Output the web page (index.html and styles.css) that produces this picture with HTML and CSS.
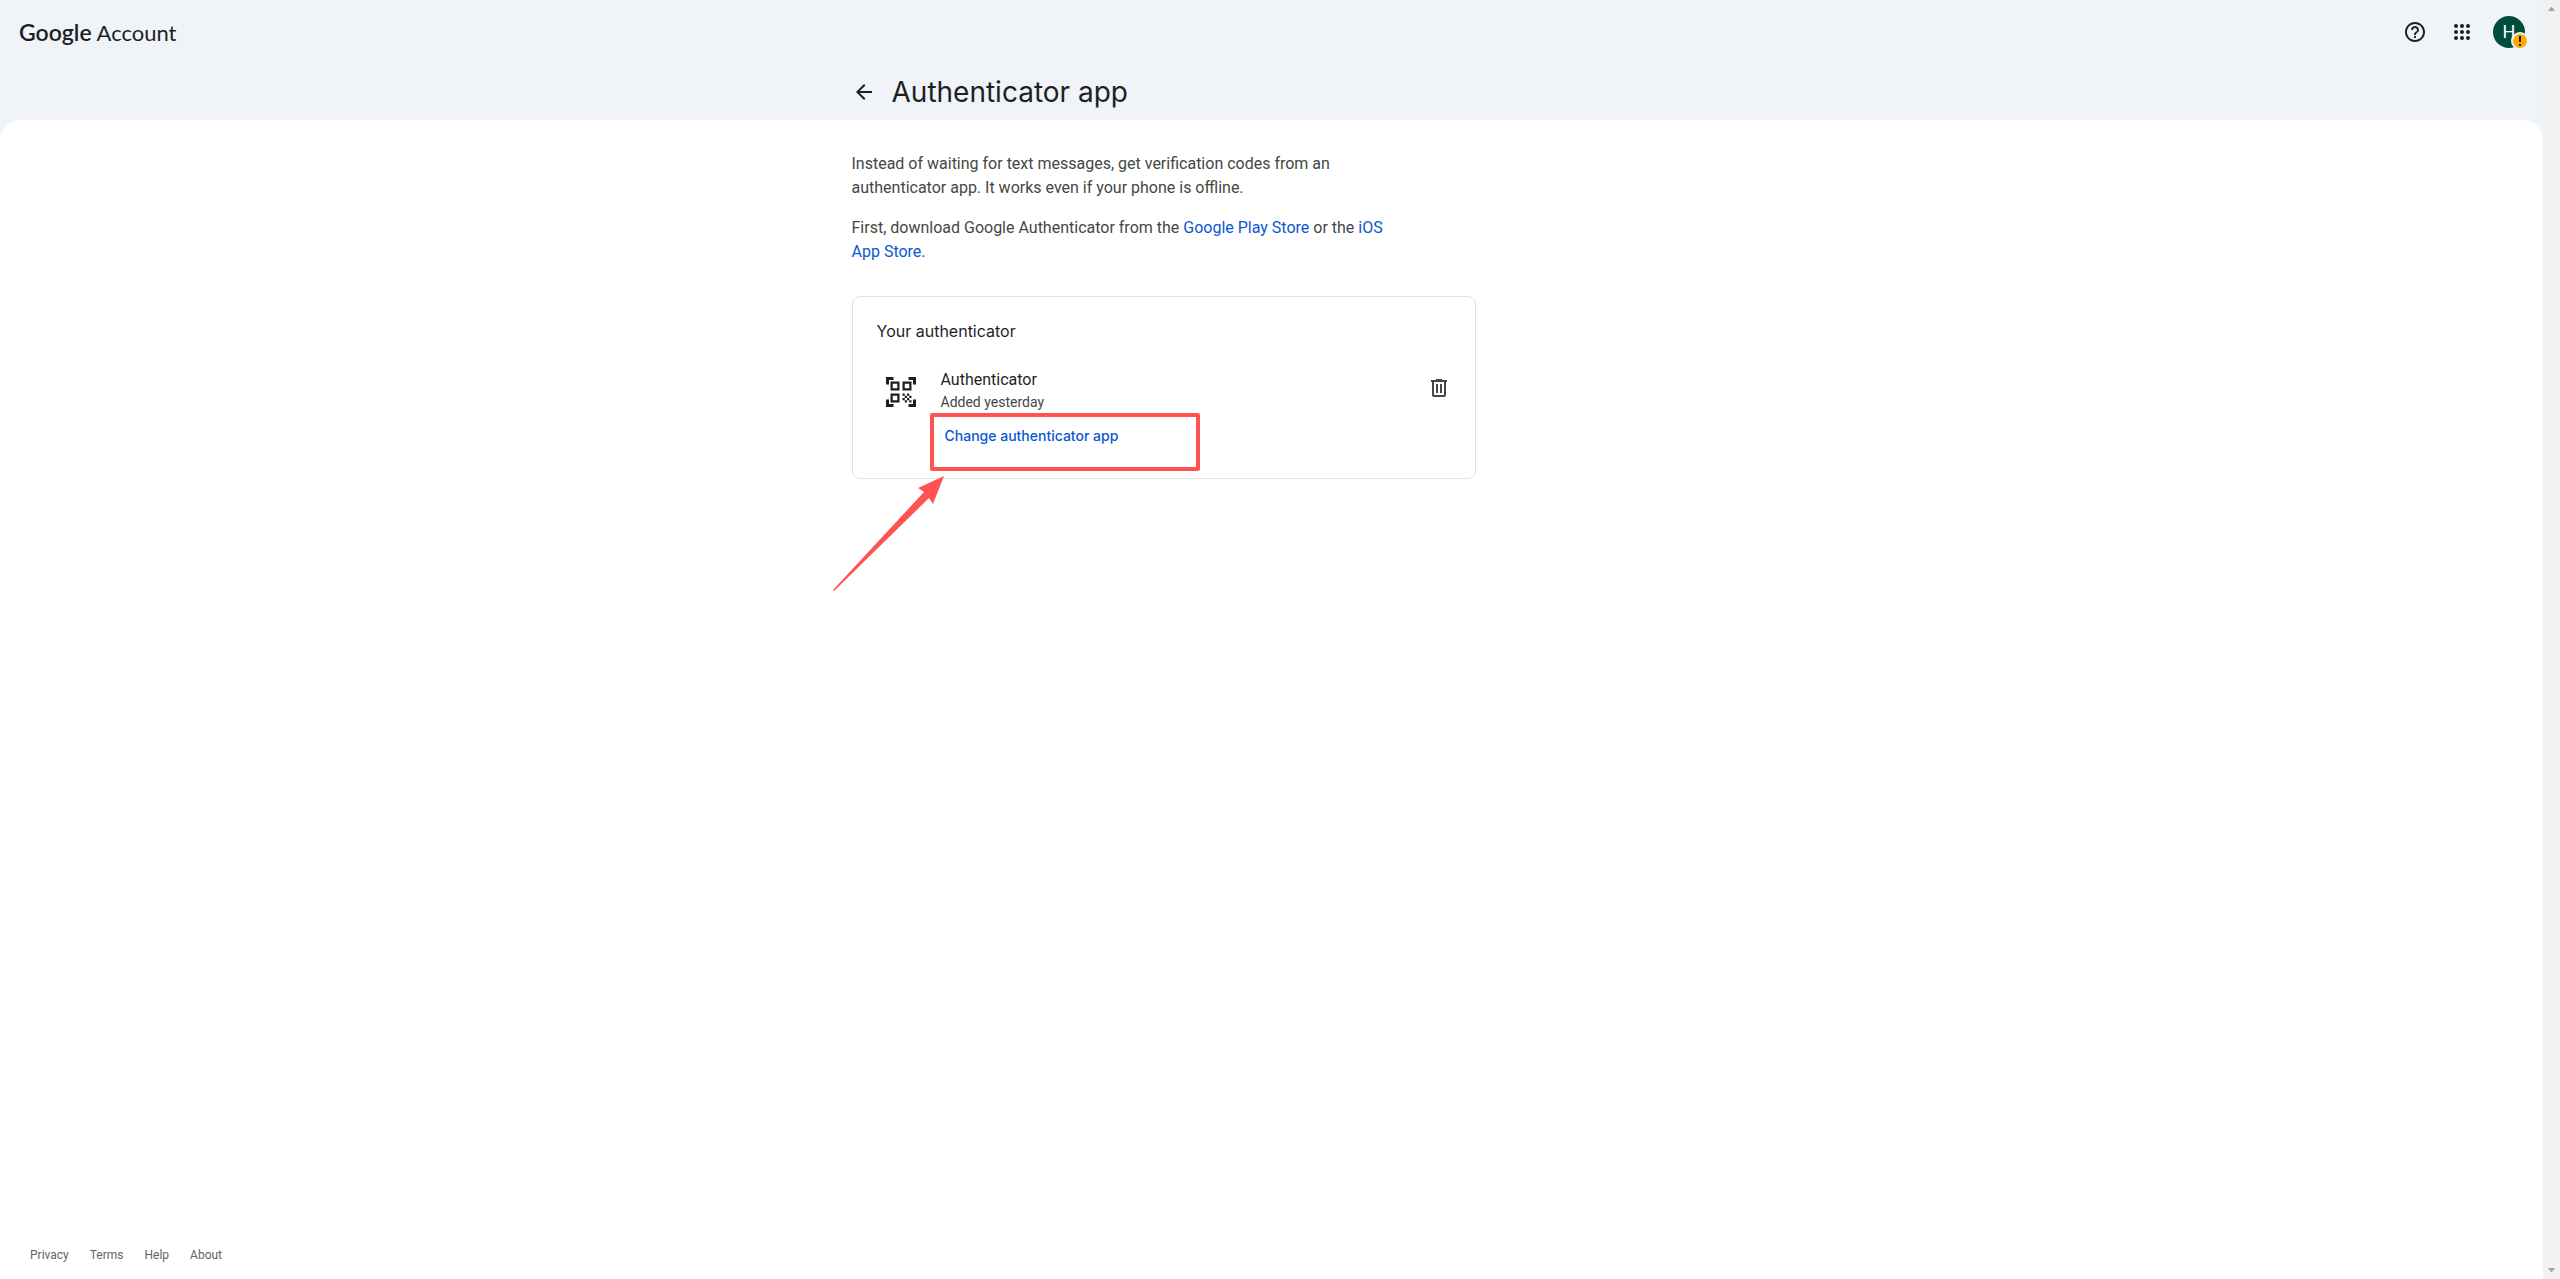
FILE: index.html
```html
<!DOCTYPE html>
<html lang="en">
<head>
  <meta charset="UTF-8">
  <meta name="viewport" content="width=device-width, initial-scale=1">
  <title>Authenticator app</title>
  <link rel="stylesheet" href="styles.css">
</head>
<body>
<div class="page">
  <header class="topbar">
    <a class="brand" href="#"><span class="brand-name">Google</span> Account</a>
    <div class="tools">
      <button class="icon-btn" type="button" aria-label="Help">
        <svg width="24" height="24" viewBox="0 0 24 24"><path d="M11 18h2v-2h-2v2zm1-16C6.480 2 2 6.480 2 12s4.480 10 10 10 10-4.480 10-10S17.520 2 12 2zm0 18c-4.410 0-8-3.590-8-8s3.590-8 8-8 8 3.590 8 8-3.590 8-8 8zm0-14c-2.210 0-4 1.790-4 4h2c0-1.100.9-2 2-2s2 .9 2 2c0 2-3 1.750-3 5h2c0-2.250 3-2.500 3-5 0-2.210-1.790-4-4-4z"/></svg>
      </button>
      <button class="icon-btn" type="button" aria-label="Google apps">
        <svg width="24" height="24" viewBox="0 0 24 24">
          <circle cx="6" cy="6" r="2"/><circle cx="12" cy="6" r="2"/><circle cx="18" cy="6" r="2"/>
          <circle cx="6" cy="12" r="2"/><circle cx="12" cy="12" r="2"/><circle cx="18" cy="12" r="2"/>
          <circle cx="6" cy="18" r="2"/><circle cx="12" cy="18" r="2"/><circle cx="18" cy="18" r="2"/>
        </svg>
      </button>
      <button class="icon-btn account" type="button" aria-label="Google Account">
        <span class="avatar">H</span>
        <svg class="badge" width="18" height="18" viewBox="0 0 18 18">
          <circle class="badge-ring" cx="9" cy="9" r="9"/>
          <circle class="badge-fill" cx="9" cy="9" r="7"/>
          <path d="M8 4h2v6H8zM8 12h2v2H8z"/>
        </svg>
      </button>
    </div>
  </header>

  <div class="heading">
    <a class="back" href="#" aria-label="Back">
      <svg width="24" height="24" viewBox="0 0 24 24"><path d="M20 11H7.830l5.590-5.590L12 4l-8 8 8 8 1.410-1.410L7.830 13H20v-2z"/></svg>
    </a>
    <h1>Authenticator app</h1>
  </div>

  <main class="sheet">
    <div class="content">
      <div class="intro">
        <p>Instead of waiting for text messages, get verification codes from an authenticator app. It works even if your phone is offline.</p>
        <p>First, download Google Authenticator from the <a href="#">Google Play Store</a> or the <a href="#">iOS App Store</a>.</p>
      </div>

      <section class="card">
        <h2>Your authenticator</h2>
        <div class="device">
          <div class="device-icon">
            <svg width="36" height="36" viewBox="0 0 24 24"><path d="M9.500 6.500v3h-3v-3h3M11 5H5v6h6V5zm-1.500 9.500v3h-3v-3h3M11 13H5v6h6v-6zm6.500-6.500v3h-3v-3h3M19 5h-6v6h6V5zm-6 8h1.500v1.500H13V13zm1.500 1.500H16V16h-1.500v-1.500zM16 13h1.500v1.500H16V13zm-3 3h1.500v1.500H13V16zm1.500 1.500H16V19h-1.500v-1.500zM16 16h1.500v1.500H16V16zm1.500-1.500H19V16h-1.500v-1.500zm0 3H19V19h-1.500v-1.500zM22 7h-2V4h-3V2h5v5zm0 15v-5h-2v3h-3v2h5zM2 22h5v-2H4v-3H2v5zM2 2v5h2V4h3V2H2z"/></svg>
          </div>
          <div class="device-info">
            <div class="device-name">Authenticator</div>
            <div class="device-date">Added yesterday</div>
            <div class="action">
              <button class="text-btn" type="button">Change authenticator app</button>
              <!-- callout drawn over the card -->
              <span class="callout"></span>
              <svg class="arrow" width="116" height="117" viewBox="0 0 116 117"><path d="M114 1L88 13l6 4L3 115l1 1 95-93 4 6z"/></svg>
            </div>
          </div>
          <button class="icon-btn delete" type="button" aria-label="Delete authenticator">
            <svg width="24" height="24" viewBox="0 0 24 24"><path fill-rule="evenodd" d="M9 3h6v1h5v2h-1v13q0 2-2 2H7q-2 0-2-2V6H4V4h5zM7 6v13h10V6zM9 8h2v9H9zM13 8h2v9h-2z"/></svg>
          </button>
        </div>
      </section>
    </div>

    <footer class="footer">
      <a href="#">Privacy</a>
      <a href="#">Terms</a>
      <a href="#">Help</a>
      <a href="#">About</a>
    </footer>
  </main>
</div>

<div class="scrollbar">
  <svg width="7" height="4" viewBox="0 0 7 4"><path d="M0 4h7L4 0H3z"/></svg>
  <svg width="7" height="4" viewBox="0 0 7 4"><path d="M0 0h7L4 4H3z"/></svg>
</div>
</body>
</html>
```

FILE: styles.css
```css
* {
  box-sizing: border-box;
}

body {
  display: flex;
  min-height: 100vh;
  margin: 0;
  background-color: #f0f4f9;
  color: #1f1f1f;
  font-family: Roboto, "Liberation Sans", sans-serif;
  font-size: 16px;
  line-height: 24px;
}

h1,
h2,
p {
  margin: 0;
}

h1,
h2 {
  font-family: Inter, "Liberation Sans", sans-serif;
  font-weight: 400;
}

a {
  color: #0b57d0;
  text-decoration: none;
}

button {
  margin: 0;
  padding: 0;
  border: none;
  background: none;
  font: inherit;
  cursor: pointer;
}

svg {
  display: block;
  fill: #1f1f1f;
}

.page {
  display: flex;
  flex: 1;
  flex-direction: column;
  min-width: 0;
}

/* top bar */
.topbar {
  display: flex;
  align-items: center;
  justify-content: space-between;
  height: 64px;
  padding: 0 14px 0 19px;
}

.brand {
  color: #1f1f1f;
  font-family: Lato, "Liberation Sans", sans-serif;
  font-size: 22px;
}

.brand-name {
  font-size: 23px;
  font-weight: 600;
}

.tools {
  display: flex;
  gap: 7px;
}

.icon-btn {
  display: flex;
  align-items: center;
  justify-content: center;
  width: 40px;
  height: 40px;
  border-radius: 50%;
}

.account {
  position: relative;
}

.avatar {
  width: 32px;
  height: 32px;
  border-radius: 50%;
  background-color: #004d40;
  color: #fff;
  font-size: 18px;
  line-height: 32px;
  text-align: center;
}

.badge {
  position: absolute;
  right: 0;
  bottom: 2px;
}

.badge-ring {
  fill: #f0f4f9;
}

.badge-fill {
  fill: #f9ab00;
}

/* title row */
.heading {
  display: flex;
  align-items: center;
  gap: 16px;
  width: 100%;
  max-width: 840px;
  height: 56px;
  margin: 0 auto;
}

h1 {
  font-size: 28px;
  line-height: 36px;
}

.sheet {
  display: flex;
  flex: 1;
  flex-direction: column;
  border-radius: 20px 20px 0 0;
  background-color: #fff;
}

.content {
  flex: 1;
  width: 100%;
  max-width: 840px;
  margin: 0 auto;
  padding-top: 32px;
}

.intro {
  display: flex;
  flex-direction: column;
  gap: 16px;
  max-width: 560px;
  color: #444746;
}

/* authenticator card */
.card {
  max-width: 624px;
  margin-top: 32px;
  padding: 22px 16px 24px 24px;
  border: 1px solid #e1e3e1;
  border-radius: 8px;
}

h2 {
  font-size: 16px;
}

.device {
  display: flex;
  gap: 16px;
  margin-top: 25px;
}

.device-icon {
  display: flex;
  align-items: center;
  justify-content: center;
  width: 48px;
  height: 48px;
}

.device-info {
  flex: 1;
}

.device-date {
  color: #444746;
  font-size: 14px;
  line-height: 20px;
}

.action {
  position: relative;
  padding-top: 6px;
}

.text-btn {
  display: block;
  padding: 8px 4px;
  color: #0b57d0;
  font-family: Inter, "Liberation Sans", sans-serif;
  font-size: 14px;
  font-weight: 500;
  line-height: 20px;
}

.callout {
  position: absolute;
  top: 1px;
  left: -11px;
  width: 270px;
  height: 58px;
  border: 4px solid #ff5252;
  border-radius: 2px;
  pointer-events: none;
}

.arrow {
  position: absolute;
  top: 63px;
  left: -111px;
  fill: #ff5252;
  pointer-events: none;
}

.delete svg {
  fill: #444746;
}

/* footer */
.footer {
  display: flex;
  gap: 21px;
  padding: 12px 30px;
  font-size: 12px;
}

.footer a {
  color: #5f6368;
}

/* scroll bar strip */
.scrollbar {
  display: flex;
  flex-direction: column;
  align-items: center;
  justify-content: space-between;
  width: 17px;
  padding: 7px 0;
  background-color: #f1f1f1;
}

.scrollbar svg {
  fill: #a3a3a3;
}
```
